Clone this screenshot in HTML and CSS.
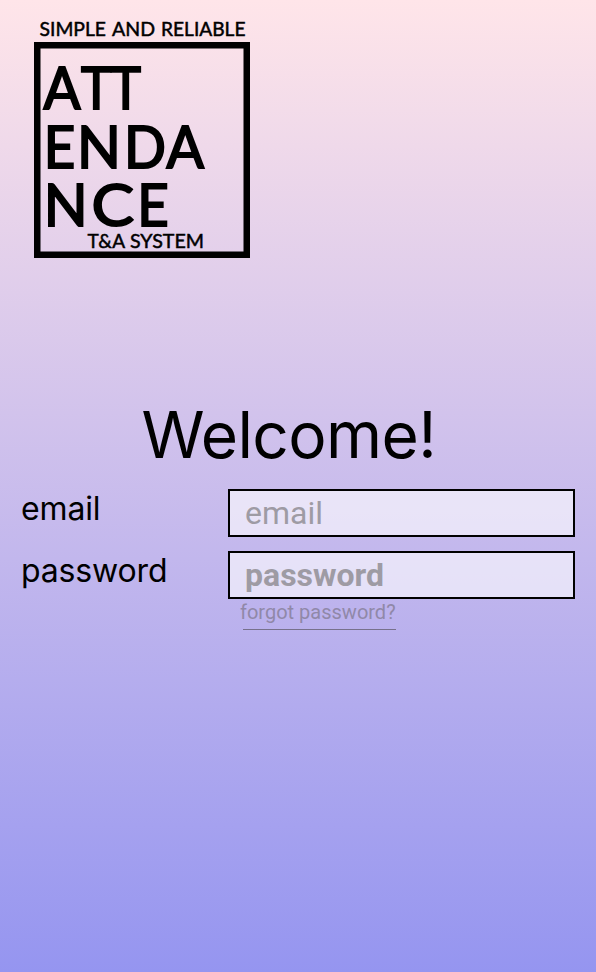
FILE: index.html
```html
<!DOCTYPE html>
<html lang="en">
<head>
<meta charset="utf-8">
<title>Attendance</title>
<link rel="stylesheet" href="styles.css">
</head>
<body>
<main class="screen">
  <svg class="logo" width="216" height="241" viewBox="34 17 216 241" role="img" aria-label="Attendance logo">
    <rect class="logo-frame" x="37.25" y="45.25" width="209.5" height="209.5"/>
    <text class="logo-small" y="36"><tspan x="39.5" textLength="66.5" lengthAdjust="spacingAndGlyphs">SIMPLE</tspan> <tspan x="112" textLength="43" lengthAdjust="spacingAndGlyphs">AND</tspan> <tspan x="161" textLength="84.5" lengthAdjust="spacingAndGlyphs">RELIABLE</tspan></text>
    <text class="logo-big" y="109.4"><tspan x="43.5" textLength="37" lengthAdjust="spacingAndGlyphs">A</tspan><tspan x="81" textLength="30.5" lengthAdjust="spacingAndGlyphs">T</tspan><tspan x="110.5" textLength="30.5" lengthAdjust="spacingAndGlyphs">T</tspan></text>
    <text class="logo-big" y="168"><tspan x="43.7" textLength="31.5" lengthAdjust="spacingAndGlyphs">E</tspan><tspan x="76.9">N</tspan><tspan x="124" textLength="42" lengthAdjust="spacingAndGlyphs">D</tspan><tspan x="166.5" textLength="37.5" lengthAdjust="spacingAndGlyphs">A</tspan></text>
    <text class="logo-big" y="226.2"><tspan x="43.7">N</tspan><tspan x="91.5" textLength="42.5" lengthAdjust="spacingAndGlyphs">C</tspan><tspan x="137.3" textLength="31.5" lengthAdjust="spacingAndGlyphs">E</tspan></text>
    <text class="logo-small" y="248"><tspan x="87.5" textLength="37" lengthAdjust="spacingAndGlyphs">T&amp;A</tspan> <tspan x="130" textLength="74" lengthAdjust="spacingAndGlyphs">SYSTEM</tspan></text>
  </svg>
  <h1 class="title">Welcome!</h1>
  <form class="form">
    <label class="label" for="email">email</label>
    <input class="field" id="email" type="email" placeholder="email">
    <label class="label" for="password">password</label>
    <input class="field field-bold" id="password" type="password" placeholder="password">
    <a class="forgot">forgot password?</a>
  </form>
</main>
</body>
</html>
```

FILE: styles.css
```css
* { box-sizing: border-box; }
body { margin: 0; }
.screen {
  height: 972px;
  padding: 17px 21px 0;
  overflow: hidden;
  background: linear-gradient(#ffe5e9, #9595f0);
  color: #000;
}
.logo { display: block; margin-left: 13px; }
.logo-frame { fill: none; stroke: #000; stroke-width: 6.5; }
.logo-small { font: 400 20px Lato, sans-serif; stroke: #000; stroke-width: 0.5; }
.logo-big { font: 400 57.5px Lato, sans-serif; stroke: #000; stroke-width: 2; }
.title {
  margin: 138px 0 0 120.5px;
  font: 400 64px/78px Inter, sans-serif;
  letter-spacing: -0.6px;
}
.form {
  display: grid;
  grid-template-columns: 207px 347px;
  grid-template-rows: 48px 48px auto;
  row-gap: 14px;
  margin-top: 15px;
}
.label { font: 400 32px/39px Inter, sans-serif; letter-spacing: -0.15px; }
.field {
  height: 48px;
  padding: 0 15px;
  border: 2px solid #000;
  border-radius: 0;
  background: rgba(255, 255, 255, 0.6) padding-box;
  font: 400 32px Roboto, sans-serif;
}
.field::placeholder { color: #9e9ba4; opacity: 1; }
.field-bold { font-weight: 700; }
.forgot {
  grid-column: 2;
  justify-self: start;
  margin: -12px 0 0 15px;
  border-bottom: 1px solid #77718c;
  width: 153px;
  height: 29px;
  font: 400 20px/23px Roboto, sans-serif;
  color: #9088a8;
  text-indent: -3px;
  white-space: nowrap;
}
```
